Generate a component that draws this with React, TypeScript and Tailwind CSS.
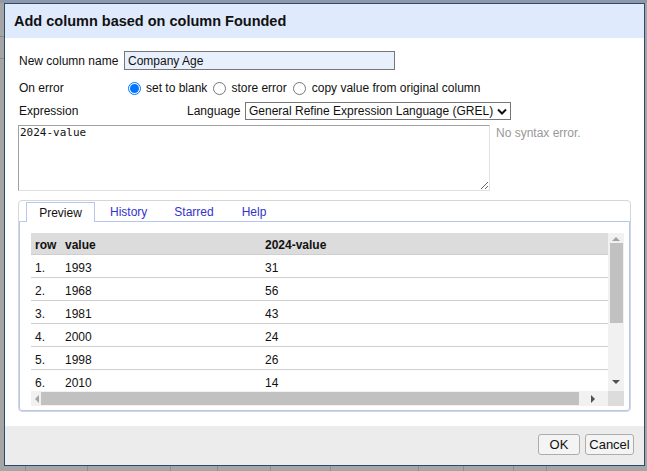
import React from "react";

const rows = [
  ["1.", "1993", "31"],
  ["2.", "1968", "56"],
  ["3.", "1981", "43"],
  ["4.", "2000", "24"],
  ["5.", "1998", "26"],
  ["6.", "2010", "14"],
];

function Radio({ checked }: { checked?: boolean }) {
  return checked ? (
    <span className="block w-[13px] h-[13px] rounded-full border-[1px] border-[#0075ff] flex items-center justify-center bg-white shrink-0">
      <span className="block w-[9px] h-[9px] rounded-full bg-[#0075ff]" />
    </span>
  ) : (
    <span className="block w-[13px] h-[13px] rounded-full border border-[#767676] bg-white shrink-0" />
  );
}

export default function App() {
  return (
    <div className="w-[647px] h-[471px] bg-[#a5a5a5] relative overflow-hidden font-['Liberation_Sans',Arial,sans-serif] text-[#111]">
      {/* page behind the modal */}
      <div className="absolute left-0 top-0 w-[647px] h-[3px] bg-[#8e98aa]" />
      <div className="absolute left-0 top-[36px] w-[4px] h-[1px] bg-[#8a8a8a]" />
      <div className="absolute left-0 top-[58px] w-[4px] h-[1px] bg-[#8a8a8a]" />
      {[25, 87, 170, 217, 270, 330, 418, 463, 513, 546].map((x) => (
        <div key={x} className="absolute top-[466px] w-[1px] h-[5px] bg-[#8d8d8d]" style={{ left: x }} />
      ))}

      <div className="absolute left-[4px] top-[3px] w-[641px] h-[463px] border border-[#2c4a6e] bg-white flex flex-col">
        {/* header */}
        <div className="h-[34px] pt-[1px] bg-[#dfeafc] flex items-center pl-[9px] shrink-0">
          <span className="text-[14.5px] font-bold text-[#111]">Add column based on column Founded</span>
        </div>

        {/* body */}
        <div className="flex-1 pl-[13px] pt-[13px] text-[12px]">
          <div className="flex items-center h-[19px]">
            <span className="w-[106px] pl-[1px]">New column name</span>
            <div className="w-[271px] h-[19px] bg-[#e8f0fe] border border-[#767676] flex items-center pl-[3px] text-[12px]">
              Company Age
            </div>
          </div>

          <div className="flex items-center h-[20px] mt-[8px]">
            <span className="w-[110px] pl-[1px]">On error</span>
            <Radio checked />
            <span className="ml-[5px]">set to blank</span>
            <span className="ml-[6px]"><Radio /></span>
            <span className="ml-[5px]">store error</span>
            <span className="ml-[6px]"><Radio /></span>
            <span className="ml-[6px]">copy value from original column</span>
          </div>

          <div className="flex items-center h-[18px] mt-[4px]">
            <span className="w-[169px] pl-[1px]">Expression</span>
            <span className="w-[58px]">Language</span>
            <div className="w-[266px] h-[18px] border border-[#767676] flex items-center pl-[3px] pr-[3px] justify-between">
              <span>General Refine Expression Language (GREL)</span>
              <svg width="10" height="7" viewBox="0 0 10 7">
                <path d="M1 1.5 L5 5.5 L9 1.5" fill="none" stroke="#111" strokeWidth="2" />
              </svg>
            </div>
          </div>

          <div className="flex mt-[5px]">
            <textarea
              readOnly
              defaultValue="2024-value"
              className="w-[472px] h-[66px] border border-t-[#a0a0a0] border-l-[#a0a0a0] border-r-[#e0e0e0] border-b-[#e0e0e0] px-[1px] pt-0 text-[11px] leading-[14px] font-['DejaVu_Sans_Mono',monospace] resize outline-none text-[#111]"
            />
            <span className="ml-[6px] mt-[-1px] text-[#999]">No syntax error.</span>
          </div>

          {/* tabs */}
          <div className="mt-[9px] w-[613px] h-[212px] border border-[#d6d6d6] rounded-[4px] flex flex-col">
            <div className="flex h-[20px] items-end pl-[7px] shrink-0">
              <div className="h-[20px] w-[69px] border border-b-0 border-[#b4c7ee] bg-white flex items-center justify-center text-[12px] text-[#111] relative top-[1px]">
                Preview
              </div>
              <span className="ml-[15px] h-[19px] flex items-center text-[#3333cc]">History</span>
              <span className="ml-[27px] h-[19px] flex items-center text-[#3333cc]">Starred</span>
              <span className="ml-[28px] h-[19px] flex items-center text-[#3333cc]">Help</span>
            </div>
            <div className="flex-1 border border-[#b4c7ee] rounded-b-[3px] pl-[11px] pt-[11px]">
              <div className="w-[593px] h-[173px] flex flex-col">
                <div className="flex h-[158px]">
                  <div className="w-[577px] h-[158px] overflow-hidden">
                    <div className="h-[22px] pt-[2px] bg-[#dcdcdc] border-b border-[#cfcfcf] flex items-center font-bold">
                      <span className="w-[30px] pl-[4px]">row</span>
                      <span className="w-[204px] pl-[4px]">value</span>
                      <span className="pl-[0px]">2024-value</span>
                    </div>
                    {rows.map((r) => (
                      <div key={r[0]} className="h-[23px] pt-[4px] border-b border-[#cfcfcf] flex items-center">
                        <span className="w-[30px] pl-[4px]">{r[0]}</span>
                        <span className="w-[204px] pl-[4px]">{r[1]}</span>
                        <span>{r[2]}</span>
                      </div>
                    ))}
                  </div>
                  {/* vertical scrollbar */}
                  <div className="w-[16px] h-[158px] bg-[#f1f1f1] flex flex-col items-center">
                    <div className="h-[10px] flex items-center justify-center">
                      <svg width="8" height="5" viewBox="0 0 8 5"><path d="M0 5 L4 1 L8 5 Z" fill="#a3a3a3" /></svg>
                    </div>
                    <div className="w-[13px] h-[80px] bg-[#c1c1c1]" />
                    <div className="flex-1" />
                    <div className="h-[17px] flex items-center justify-center">
                      <svg width="8" height="5" viewBox="0 0 8 5"><path d="M0 0 L8 0 L4 4 Z" fill="#505050" /></svg>
                    </div>
                  </div>
                </div>
                {/* horizontal scrollbar */}
                <div className="flex h-[15px]">
                  <div className="w-[577px] h-[15px] bg-[#f1f1f1] flex items-center">
                    <div className="w-[10px] flex items-center justify-center">
                      <svg width="5" height="8" viewBox="0 0 5 8"><path d="M5 0 L5 8 L1 4 Z" fill="#a3a3a3" /></svg>
                    </div>
                    <div className="w-[538px] h-[13px] bg-[#c1c1c1]" />
                    <div className="flex-1 flex items-center justify-center">
                      <svg width="5" height="8" viewBox="0 0 5 8"><path d="M0 0 L0 8 L4 4 Z" fill="#505050" /></svg>
                    </div>
                  </div>
                  <div className="w-[16px] h-[15px] bg-[#dcdcdc]" />
                </div>
              </div>
            </div>
          </div>
        </div>

        {/* footer */}
        <div className="h-[39px] bg-[#ececec] flex justify-end items-start pt-[8px] pr-[10px] shrink-0">
          <button className="w-[42px] h-[21px] border border-[#adadad] rounded-[3px] bg-[#f4f4f4] text-[13px] text-[#111] flex items-center justify-center">
            OK
          </button>
          <button className="ml-[5px] w-[49px] h-[21px] border border-[#adadad] rounded-[3px] bg-[#f4f4f4] text-[13px] text-[#111] flex items-center justify-center">
            Cancel
          </button>
        </div>
      </div>
    </div>
  );
}
